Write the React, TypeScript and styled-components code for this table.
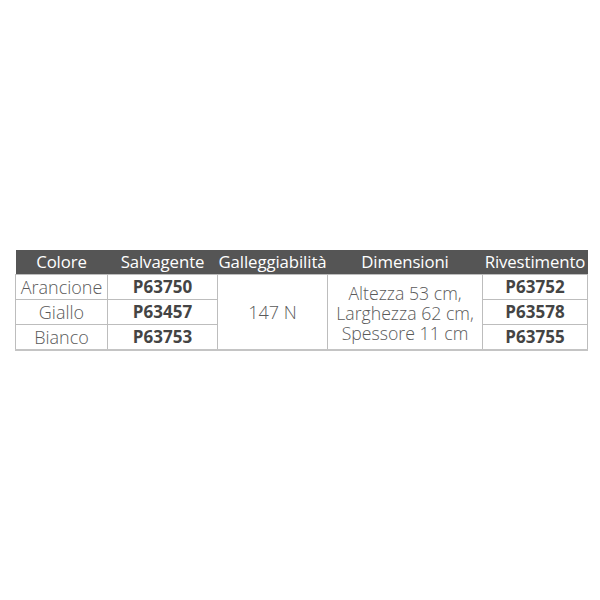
import React from "react";
import styled, { createGlobalStyle } from "styled-components";

const Global = createGlobalStyle`
  html, body { margin: 0; padding: 0; background: #fff; }
  body { width: 600px; height: 600px; font-family: "Open Sans", "DejaVu Sans", sans-serif; }
`;

const Page = styled.div`
  width: 600px;
  height: 600px;
  display: flex;
  align-items: flex-start;
  justify-content: flex-start;
  padding: 250px 0 0 15px;
  box-sizing: border-box;
`;

const Table = styled.table`
  border-collapse: collapse;
  table-layout: fixed;
  width: 572px;
  font-family: "Open Sans", sans-serif;
  border-bottom: 2px solid #c4c4c4;
`;

const Head = styled.th<{ $w: number }>`
  width: ${(p) => p.$w}px;
  height: 24px;
  padding: 0;
  background: #555555;
  color: #ffffff;
  font-weight: 400;
  font-size: 16.8px;
  letter-spacing: -0.1px;
  text-align: center;
  white-space: nowrap;
  line-height: 24px;
`;

const Cell = styled.td<{ $bold?: boolean }>`
  height: 24px;
  padding: 0;
  border: 1px solid #bdbdbd;
  color: ${(p) => (p.$bold ? "#444" : "#5a5a5a")};
  font-weight: ${(p) => (p.$bold ? 700 : 300)};
  font-size: ${(p) => (p.$bold ? "17px" : "18px")};
  text-align: center;
  white-space: nowrap;
  line-height: 24px;
  vertical-align: middle;
`;

const Multi = styled.div`
  line-height: 20px;
  font-size: 17.7px;
  padding-top: 2px;
`;

const cols: [string, number][] = [
  ["Colore", 92],
  ["Salvagente", 110],
  ["Galleggiabilità", 110],
  ["Dimensioni", 155],
  ["Rivestimento", 105],
];

const rows = [
  ["Arancione", "P63750", "P63752"],
  ["Giallo", "P63457", "P63578"],
  ["Bianco", "P63753", "P63755"],
];

export default function App() {
  return (
    <>
      <Global />
      <Page>
        <Table>
          <thead>
            <tr>
              {cols.map(([c, w]) => (
                <Head key={c} $w={w}>
                  {c}
                </Head>
              ))}
            </tr>
          </thead>
          <tbody>
            {rows.map((r, i) => (
              <tr key={r[0]}>
                <Cell>{r[0]}</Cell>
                <Cell $bold>{r[1]}</Cell>
                {i === 0 && (
                  <>
                    <Cell rowSpan={3}>147 N</Cell>
                    <Cell rowSpan={3}>
                      <Multi>
                        Altezza 53 cm,
                        <br />
                        Larghezza 62 cm,
                        <br />
                        Spessore 11 cm
                      </Multi>
                    </Cell>
                  </>
                )}
                <Cell $bold>{r[2]}</Cell>
              </tr>
            ))}
          </tbody>
        </Table>
      </Page>
    </>
  );
}
